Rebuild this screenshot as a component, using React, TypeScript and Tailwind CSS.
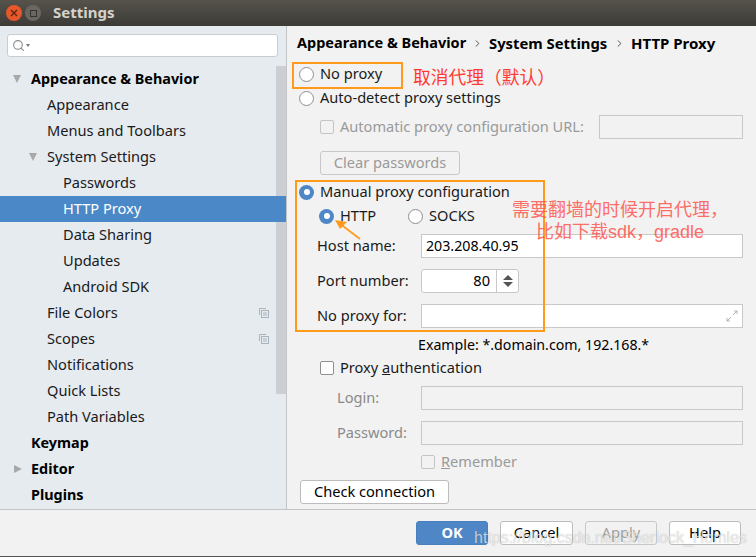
import { Search, ChevronRight } from "lucide-react";

const font = "font-['Noto_Sans','Open_Sans',sans-serif]";

function Radio({ checked }: { checked?: boolean }) {
  if (checked) {
    return (
      <span className="flex h-[15px] w-[15px] shrink-0 items-center justify-center rounded-full bg-[#4f86c6]">
        <span className="h-[6px] w-[6px] rounded-full bg-white" />
      </span>
    );
  }
  return <span className="h-[15px] w-[15px] shrink-0 rounded-full border border-[#8f8f8f] bg-white" />;
}

function Check({ disabled }: { disabled?: boolean }) {
  return (
    <span
      className={`h-[14px] w-[14px] shrink-0 rounded-[2px] border ${
        disabled ? "border-[#c4c4c4] bg-[#f2f2f2]" : "border-[#8f8f8f] bg-white"
      }`}
    />
  );
}

function Field({ disabled, children }: { disabled?: boolean; children?: React.ReactNode }) {
  return (
    <div
      className={`flex h-[24px] flex-1 items-center border px-[4px] ${
        disabled ? "border-[#c8c8c8] bg-[#f2f2f2]" : "border-[#c8c8c8] bg-white"
      }`}
    >
      {children}
    </div>
  );
}

function TreeRow({
  label,
  indent,
  bold,
  selected,
  arrow,
  shared,
}: {
  label: string;
  indent: string;
  bold?: boolean;
  selected?: boolean;
  arrow?: "down" | "right";
  shared?: boolean;
}) {
  return (
    <div
      className={`relative flex h-[26px] items-center pb-[1px] ${indent} ${
        selected ? "bg-[#4a88c7] text-white" : "text-[#1a1a1a]"
      } ${bold ? "text-[14.4px] font-bold text-black" : ""}`}
    >
      {arrow === "down" && (
        <span className="absolute ml-[-18px] h-0 w-0 border-x-[4px] border-t-[8px] border-x-transparent border-t-[#a8a8a8]" />
      )}
      {arrow === "right" && (
        <span className="absolute ml-[-17px] h-0 w-0 border-y-[4px] border-l-[8px] border-y-transparent border-l-[#a8a8a8]" />
      )}
      {label}
      {shared && (
        <svg className="absolute right-[17px]" width="10" height="10" viewBox="0 0 10 10" fill="none" stroke="#a9b4bd">
          <path d="M0.5 7V0.5H7" />
          <rect x="2.5" y="2.5" width="7" height="7" />
          <path d="M4 5h4M4 7h4" />
        </svg>
      )}
    </div>
  );
}

function FooterButton({
  label,
  width,
  primary,
  disabled,
}: {
  label: string;
  width: string;
  primary?: boolean;
  disabled?: boolean;
}) {
  return (
    <div
      className={`flex h-[24px] items-center justify-center rounded-[3px] border ${width} ${
        primary
          ? "border-[#4a7fbd] bg-[#4f86c6] font-bold text-white"
          : disabled
            ? "border-[#c8c8c8] bg-[#f2f2f2] text-[#a0a0a0]"
            : "border-[#bcbcbc] bg-white text-black"
      }`}
    >
      {label}
    </div>
  );
}

export default function App() {
  return (
    <div className={`relative flex h-[557px] w-[756px] flex-col overflow-hidden bg-[#f2f2f2] text-[14.6px] ${font}`}>
      {/* title bar */}
      <div className="flex h-[26px] shrink-0 items-center bg-gradient-to-b from-[#56534c] to-[#3c3b37] pl-[6px]">
        <span className="flex h-[16px] w-[16px] items-center justify-center rounded-full bg-[#e6582c] text-[#5c2410]">
          <svg width="8" height="8" viewBox="0 0 8 8" stroke="currentColor" strokeWidth="1.4">
            <path d="M1 1l6 6M7 1l-6 6" />
          </svg>
        </span>
        <span className="ml-[3px] flex h-[16px] w-[16px] items-center justify-center rounded-full bg-[#69675f]">
          <span className="h-[7px] w-[7px] border border-[#35332f]" />
        </span>
        <span className="ml-[12px] pb-[2px] text-[15px] font-bold text-[#d6d2c9]">Settings</span>
      </div>

      <div className="flex min-h-0 flex-1 border-b border-[#c4c4c4]">
        {/* sidebar */}
        <div className="flex w-[287px] shrink-0 flex-col border-r border-[#c4c4c4] bg-[#e6ebf0]">
          <div className="mx-[7px] mt-[8px] flex h-[23px] w-[271px] shrink-0 items-center rounded-[3px] border border-[#c9ccd0] bg-white pl-[4px] text-[#8a8a8a]">
            <Search size={13} />
            <span className="ml-[1px] h-0 w-0 border-x-[2px] border-t-[3px] border-x-transparent border-t-[#777]" />
          </div>
          <div className="flex min-h-0 flex-1 pt-[9px]">
            <div className="w-[276px]">
              <TreeRow label="Appearance & Behavior" indent="pl-[31px]" bold arrow="down" />
              <TreeRow label="Appearance" indent="pl-[47px]" />
              <TreeRow label="Menus and Toolbars" indent="pl-[47px]" />
              <TreeRow label="System Settings" indent="pl-[47px]" arrow="down" />
              <TreeRow label="Passwords" indent="pl-[63px]" />
              <div className="w-[286px]">
                <TreeRow label="HTTP Proxy" indent="pl-[63px]" selected />
              </div>
              <TreeRow label="Data Sharing" indent="pl-[63px]" />
              <TreeRow label="Updates" indent="pl-[63px]" />
              <TreeRow label="Android SDK" indent="pl-[63px]" />
              <div className="w-[286px]">
                <TreeRow label="File Colors" indent="pl-[47px]" shared />
                <TreeRow label="Scopes" indent="pl-[47px]" shared />
              </div>
              <TreeRow label="Notifications" indent="pl-[47px]" />
              <TreeRow label="Quick Lists" indent="pl-[47px]" />
              <TreeRow label="Path Variables" indent="pl-[47px]" />
              <TreeRow label="Keymap" indent="pl-[31px]" bold />
              <TreeRow label="Editor" indent="pl-[31px]" bold arrow="right" />
              <TreeRow label="Plugins" indent="pl-[31px]" bold />
            </div>
            <div className="h-[328px] w-[10px] bg-[#cbcfd4]" />
          </div>
        </div>

        {/* proxy panel */}
        <div className="min-w-0 flex-1 pl-[13px] pr-[13px] text-[#1a1a1a]">
          <div className="mt-[7px] flex h-[20px] items-center text-[14.5px] font-bold text-black">
            <span className="ml-[-3px] w-[168px] whitespace-nowrap">Appearance &amp; Behavior</span>
            <ChevronRight size={11} className="mx-[6.5px] text-[#444]" />
            <span className="w-[118px] whitespace-nowrap text-[14.8px]">System Settings</span>
            <ChevronRight size={11} className="mx-[6.5px] text-[#444]" />
            <span className="whitespace-nowrap text-[15px]">HTTP Proxy</span>
          </div>

          <div className="ml-[-1px] mt-[9px] flex h-[24px] items-center gap-[6px]">
            <Radio /> No proxy
          </div>
          <div className="ml-[-1px] flex h-[24px] items-center gap-[6px]">
            <Radio /> Auto-detect proxy settings
          </div>

          <div className="mt-[5px] flex h-[24px] items-center pl-[20px] text-[#9a9a9a]">
            <Check disabled />
            <span className="ml-[6px]">Automatic proxy configuration URL:</span>
            <div className="ml-auto h-[24px] w-[144px] border border-[#c8c8c8]" />
          </div>

          <div className="ml-[20px] mt-[12px] flex h-[24px] w-[140px] items-center justify-center rounded-[3px] border border-[#c8c8c8] text-[#9a9a9a]">
            Clear passwords
          </div>

          <div className="ml-[-1px] mt-[5px] flex h-[24px] items-center gap-[6px]">
            <Radio checked /> Manual proxy configuration
          </div>
          <div className="flex h-[24px] items-center pl-[19px]">
            <Radio checked />
            <span className="ml-[6px] w-[68px]">HTTP</span>
            <Radio />
            <span className="ml-[6px]">SOCKS</span>
          </div>

          <div className="mt-[6px] grid grid-cols-[104px_1fr] gap-y-[11px] pl-[17px]">
            <div className="flex h-[24px] items-center">Host name:</div>
            <Field>
              <span className="text-[14.2px] text-black">203.208.40.95</span>
            </Field>
            <div className="flex h-[24px] items-center">Port number:</div>
            <div className="flex h-[24px] w-[98px] items-center rounded-[3px] border border-[#c8c8c8] bg-white">
              <span className="flex-1 pr-[6px] text-right text-black">80</span>
              <div className="flex h-full w-[22px] flex-col items-center justify-center gap-[2px] border-l border-[#c8c8c8]">
                <span className="h-0 w-0 border-x-[5px] border-b-[5px] border-x-transparent border-b-[#555]" />
                <span className="h-0 w-0 border-x-[5px] border-t-[5px] border-x-transparent border-t-[#555]" />
              </div>
            </div>
            <div className="flex h-[24px] items-center">No proxy for:</div>
            <Field>
              <svg className="ml-auto" width="12" height="12" viewBox="0 0 12 12" fill="none" stroke="#a9b4bd">
                <path d="M7 5l4-4M8 1h3v3M5 7l-4 4M1 8v3h3" />
              </svg>
            </Field>
          </div>

          <div className="ml-[118px] mt-[5px] flex h-[24px] items-center text-[14.2px] text-black">
            Example: *.domain.com, 192.168.*
          </div>

          <div className="mt-[-1px] flex h-[24px] items-center pl-[20px]">
            <Check />
            <span className="ml-[6px]">
              Proxy <span className="underline">a</span>uthentication
            </span>
          </div>

          <div className="mt-[6px] grid grid-cols-[104px_1fr] gap-y-[11px] pl-[17px] text-[#8a8a8a]">
            <div className="flex h-[24px] items-center pl-[20px]">Login:</div>
            <Field disabled />
            <div className="flex h-[24px] items-center pl-[20px]">Password:</div>
            <Field disabled />
          </div>

          <div className="ml-[121px] mt-[5px] flex h-[24px] items-center text-[#9a9a9a]">
            <Check disabled />
            <span className="ml-[6px]">
              <span className="underline">R</span>emember
            </span>
          </div>

          <div className="mt-[6px] flex h-[24px] w-[149px] items-center justify-center rounded-[3px] border border-[#bcbcbc] bg-white text-black">
            Check connection
          </div>
        </div>
      </div>

      {/* footer */}
      <div className="flex h-[47px] shrink-0 items-center justify-end gap-[12px] border-b border-[#55534d] pr-[15px]">
        <FooterButton label="OK" width="w-[72px]" primary />
        <FooterButton label="Cancel" width="w-[73px]" />
        <FooterButton label="Apply" width="w-[72px]" disabled />
        <FooterButton label="Help" width="w-[72px]" />
      </div>

      {/* annotations drawn over the screenshot */}
      <div className="absolute left-[292px] top-[62px] h-[27px] w-[111px] border-2 border-[#ff9a1a]" />
      <div className="absolute left-[295px] top-[180px] h-[152px] w-[250px] border-2 border-[#ff9a1a]" />
      <div className="absolute left-[413px] top-[64px] whitespace-nowrap font-['Noto_Sans_CJK_SC',sans-serif] text-[17.75px] leading-[24px] text-[#ff3b30]">
        取消代理（默认）
      </div>
      <div className="absolute left-[512px] top-[199px] whitespace-nowrap font-['Liberation_Sans','Noto_Sans_CJK_SC',sans-serif] text-[18px] leading-[22px] text-[#ff4d45] opacity-80">
        <div>需要翻墙的时候开启代理，</div>
        <div className="ml-[24px]">比如下载sdk，gradle</div>
      </div>
      <svg className="absolute left-[330px] top-[214px]" width="36" height="30" viewBox="0 0 36 30" fill="none">
        <path d="M30 25L9 9" stroke="#ff9a1a" strokeWidth="1.6" />
        <path d="M5 6l12 2-7 7z" fill="#ff9a1a" />
      </svg>
      <div className="absolute left-[474px] top-[526px] whitespace-nowrap font-['Liberation_Sans',sans-serif] text-[16px] leading-[24px] text-white/70 [text-shadow:0_0_1px_rgba(0,0,0,0.3)]">
        https://blog.csdn.net/Sherlock_Homles
      </div>
    </div>
  );
}
